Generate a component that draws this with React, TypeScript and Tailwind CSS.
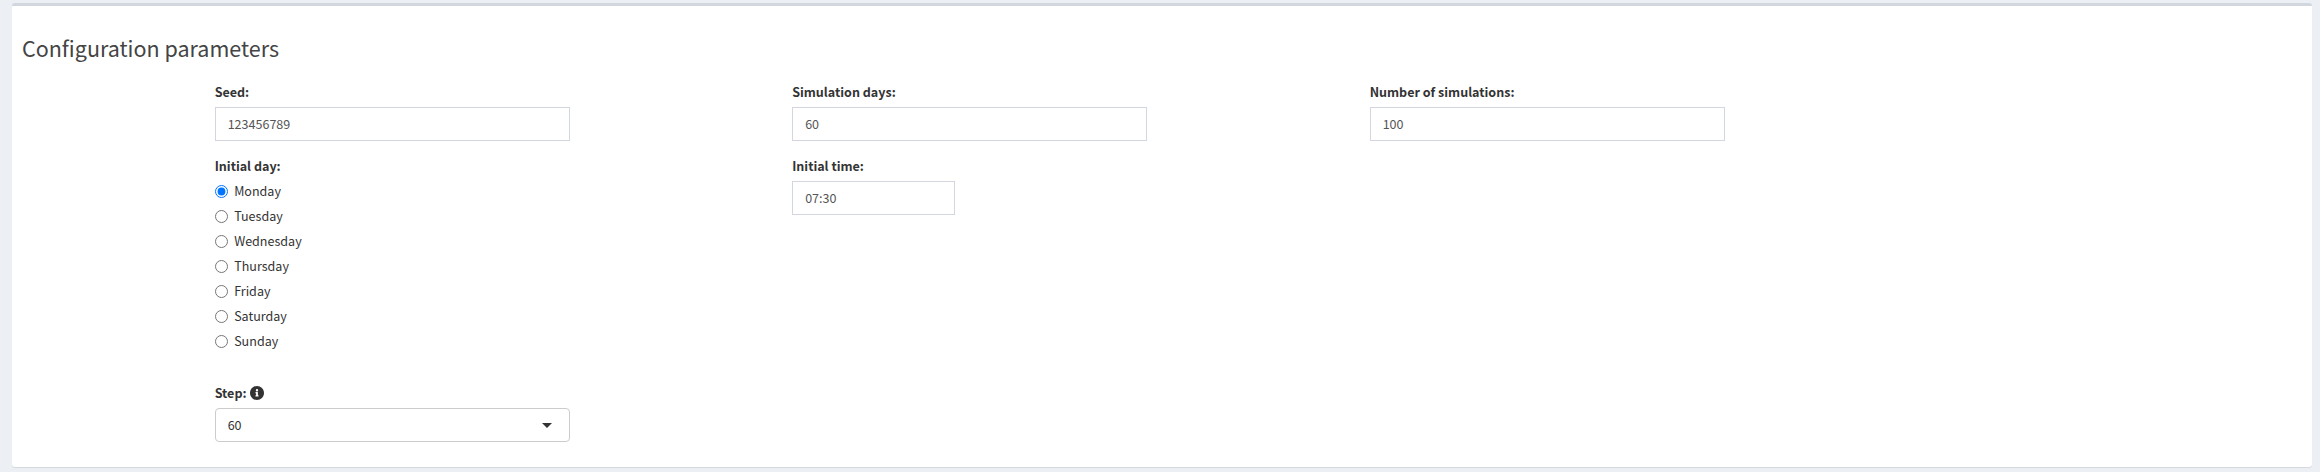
import React from "react";

const days = ["Monday", "Tuesday", "Wednesday", "Thursday", "Friday", "Saturday", "Sunday"];

function Label({ children }: { children: React.ReactNode }) {
  return <div className="mb-[5px] flex h-5 items-center font-bold whitespace-nowrap">{children}</div>;
}

function Field({ label, value, width }: { label: string; value: string; width: string }) {
  return (
    <label className="block">
      <Label>{label}</Label>
      <input
        defaultValue={value}
        className={`block h-[34px] border border-[#d2d6de] bg-white px-3 pt-1 pb-1.5 text-[#555] outline-none ${width}`}
      />
    </label>
  );
}

export default function App() {
  return (
    <div className="h-[472px] bg-[#ecf0f5] px-3 pt-[3px] pr-2 font-['Noto_Sans_CJK_SC','Noto_Sans',sans-serif] text-[12.54px] leading-5 text-[#333]">
      <div className="h-[464px] rounded-[3px] border-t-[3px] border-[#d2d6de] bg-white px-2.5 pt-[29px] shadow-[0_1px_1px_rgba(0,0,0,0.1)]">
        <h3 className="h-[26px] text-[21.5px] leading-[26px] text-[#444]">Configuration parameters</h3>
        <div className="mt-[21px] ml-[192.67px] grid w-fit grid-cols-[577.5px_577.5px_577.5px]">
          <div>
            <Field label="Seed:" value="123456789" width="w-[355px]" />
            <div className="mt-[15px] h-[212px]">
              <div className="flex h-5 items-center font-bold">Initial day:</div>
              <div className="mt-[5px] flex flex-col gap-[5px]">
                {days.map((day, i) => (
                  <label key={day} className="flex h-5 items-center">
                    <input type="radio" name="day" defaultChecked={i === 0} className="mr-[6.5px] h-[13px] w-[13px]" />
                    <span>{day}</span>
                  </label>
                ))}
              </div>
            </div>
            <div className="mt-[15px]">
              <Label>
                <span>Step:</span>
                <svg viewBox="8 8 496 496" className="ml-[3px] h-3.5 w-3.5" fill="currentColor">
                  <path d="M256 8C119 8 8 119 8 256s111 248 248 248 248-111 248-248S393 8 256 8zm0 110a42 42 0 1 1 0 84 42 42 0 0 1 0-84zm56 254a12 12 0 0 1-12 12h-88a12 12 0 0 1-12-12v-24a12 12 0 0 1 12-12h12v-64h-12a12 12 0 0 1-12-12v-24a12 12 0 0 1 12-12h64a12 12 0 0 1 12 12v100h12a12 12 0 0 1 12 12z" />
                </svg>
              </Label>
              <div className="flex h-[34px] w-[355px] items-center justify-between rounded border border-[#ccc] px-3 pr-[17px]">
                <span>60</span>
                <svg viewBox="0 0 10 5" className="h-[5px] w-[10px]" fill="currentColor">
                  <path d="M0 0h10L5 5z" />
                </svg>
              </div>
            </div>
          </div>
          <div className="flex flex-col gap-[15px]">
            <Field label="Simulation days:" value="60" width="w-[355px]" />
            <Field label="Initial time:" value="07:30" width="w-[163px]" />
          </div>
          <div>
            <Field label="Number of simulations:" value="100" width="w-[355px]" />
          </div>
        </div>
      </div>
    </div>
  );
}
